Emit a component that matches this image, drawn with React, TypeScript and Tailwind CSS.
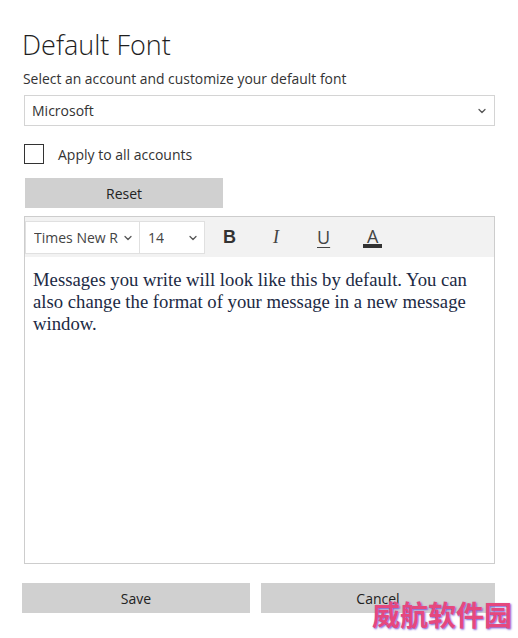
import { ChevronDown } from 'lucide-react';

const Dropdown = ({ label, className }: { label: string; className: string }) => (
  <div
    className={`flex items-center justify-between bg-white border border-[#d4d4d4] ${className}`}
  >
    <span className="truncate">{label}</span>
    <ChevronDown className="w-3 h-3 shrink-0 text-[#555]" strokeWidth={2.5} />
  </div>
);

const App = () => {
  return (
    <div className="relative w-[518px] h-[638px] bg-white overflow-hidden font-['Open_Sans',sans-serif] text-[#222]">
      <div className="pl-6 pr-[23px] pt-[26px]">
        <h1 className="-ml-[2px] text-[27px] leading-[38px] font-light text-[#1e1e1e]">
          Default Font
        </h1>
        <p className="mt-[5px] -ml-px text-[13.9px] leading-5 text-[#333]">
          Select an account and customize your default font
        </p>

        <Dropdown
          label="Microsoft"
          className="mt-[6px] h-[31px] pl-[7px] pr-[6px] text-[14px] text-[#333]"
        />

        <label className="mt-[18px] flex items-center h-5">
          <span className="w-5 h-5 border-[1.5px] border-[#333] bg-white" />
          <span className="ml-[14px] text-[14px] text-[#333]">Apply to all accounts</span>
        </label>

        <button className="mt-[14px] ml-px w-[198px] h-[30px] bg-[#d0d0d0] text-[14px] text-[#222]">
          Reset
        </button>

        <div className="mt-2 h-[348px] border border-[#cdcdcd] flex flex-col">
          <div className="h-[40px] bg-[#f2f2f2] flex items-start pt-[4px]">
            <Dropdown
              label="Times New R"
              className="w-[115px] h-[33px] pl-[8px] pr-[5px] text-[14px] text-[#444] border-[#e0e0e0]"
            />
            <Dropdown
              label="14"
              className="w-[65px] h-[33px] pl-[8px] pr-[5px] text-[14px] text-[#444] border-[#e0e0e0] border-l-0"
            />
            <div className="flex items-center h-[33px] text-[18px] text-[#333]">
              <span className="ml-[18px] w-[12px] font-bold font-['Liberation_Sans',sans-serif]">B</span>
              <span className="ml-[38px] italic font-['Liberation_Serif',serif] text-[#444]">I</span>
              <span className="ml-[38px] underline underline-offset-[3px] text-[#444]">U</span>
              <span className="ml-[33px] flex flex-col items-center text-[#444]">
                <span className="leading-[18px]">A</span>
                <span className="w-[19px] h-[4px] bg-[#333] -mt-[1px]" />
              </span>
            </div>
          </div>
          <div className="flex-1 px-2 pt-[12px] font-['Liberation_Serif',serif] text-[18.7px] leading-[22px] text-[#1c2a44]">
            Messages you write will look like this by default. You can also change the format of
            your message in a new message window.
          </div>
        </div>

        <div className="mt-[19px] flex gap-[11px] -ml-[2px]">
          <button className="w-[228px] h-[30px] bg-[#d0d0d0] text-[14px] text-[#222]">Save</button>
          <button className="flex-1 h-[30px] bg-[#d0d0d0] text-[14px] text-[#222]">Cancel</button>
        </div>
      </div>

      <div className="absolute left-[372px] top-[596px] text-[28px] leading-[36px] font-bold text-[#e5487e] [text-shadow:1px_1px_2px_#7b5cd6] font-['Noto_Sans_CJK_SC',sans-serif]">
        威航软件园
      </div>
    </div>
  );
};

export default App;
